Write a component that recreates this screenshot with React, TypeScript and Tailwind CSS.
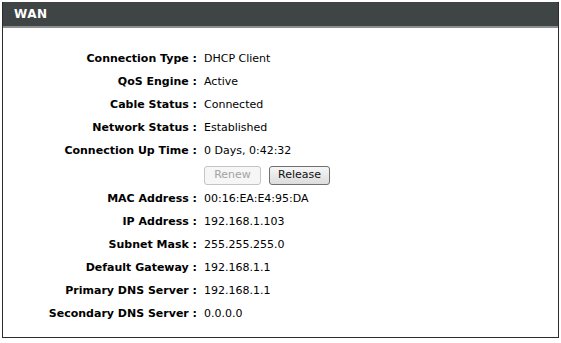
import React from "react";

interface IRow {
  label: string;
  value?: string;
}

const rows: IRow[] = [
  { label: "Connection Type :", value: "DHCP Client" },
  { label: "QoS Engine :", value: "Active" },
  { label: "Cable Status :", value: "Connected" },
  { label: "Network Status :", value: "Established" },
  { label: "Connection Up Time :", value: "0 Days, 0:42:32" },
];

const rows2: IRow[] = [
  { label: "MAC Address :", value: "00:16:EA:E4:95:DA" },
  { label: "IP Address :", value: "192.168.1.103" },
  { label: "Subnet Mask :", value: "255.255.255.0" },
  { label: "Default Gateway :", value: "192.168.1.1" },
  { label: "Primary DNS Server :", value: "192.168.1.1" },
  { label: "Secondary DNS Server :", value: "0.0.0.0" },
];

const Row: React.FC<IRow> = ({ label, value }) => (
  <div className="flex h-[23px] items-center">
    <div className="w-[194px] text-right font-bold text-[11px] text-black">{label}</div>
    <div className="pl-[7px] text-[11px] text-black">{value}</div>
  </div>
);

const App: React.FC = () => {
  return (
    <div className="w-[561px] h-[343px] bg-white pt-[2px] pl-[2px]" style={{ fontFamily: '"DejaVu Sans", Verdana, sans-serif' }}>
      <div className="w-[557px] h-[336px] border border-[#2b2b2b] border-t-0 flex flex-col">
        <div className="h-[26px] bg-[#3f4444] border-b-2 border-[#8a8f8f] flex items-center pl-[11px]">
          <span className="text-white font-bold text-[12px] tracking-[0.5px]">WAN</span>
        </div>
        <div className="pt-[20px] flex flex-col">
          {rows.map((r) => (
            <Row key={r.label} label={r.label} value={r.value} />
          ))}
          <div className="flex h-[25px] items-center pl-[201px] gap-[8px]">
            <button disabled className="h-[19px] w-[57px] rounded-[3px] border border-[#c4c4c4] bg-[#f6f6f6] text-[11px] text-[#a3a3a3]">
              Renew
            </button>
            <button className="h-[19px] w-[61px] rounded-[3px] border border-[#707070] bg-gradient-to-b from-[#f6f6f6] to-[#dcdcdc] text-[11px] text-[#111]">
              Release
            </button>
          </div>
          {rows2.map((r) => (
            <Row key={r.label} label={r.label} value={r.value} />
          ))}
        </div>
      </div>
    </div>
  );
};

export default App;
